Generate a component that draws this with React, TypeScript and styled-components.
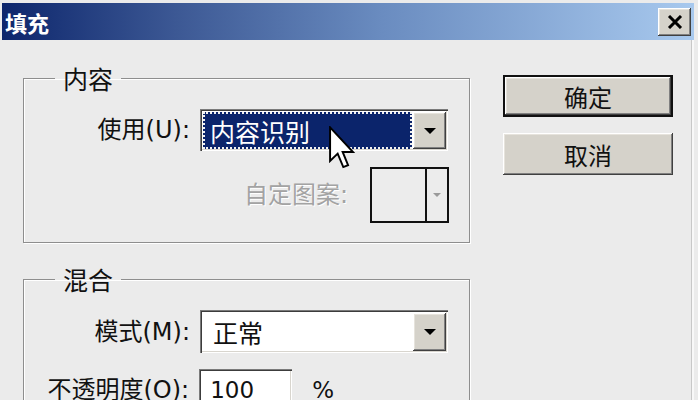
import React from "react";
import styled, { createGlobalStyle } from "styled-components";

const GlobalStyle = createGlobalStyle`
  html, body { margin: 0; padding: 0; background: #ebebeb; }
  body { font-family: "DejaVu Sans", "Noto Sans CJK SC", sans-serif; }
`;

const Window = styled.div`
  width: 698px;
  height: 400px;
  overflow: hidden;
  background: #ebebeb;
  box-sizing: border-box;
  padding: 3px 4px 0 2px;
  display: flex;
  flex-direction: column;
`;

const TitleBar = styled.div`
  height: 37px;
  flex: none;
  display: flex;
  align-items: center;
  justify-content: space-between;
  padding: 0 3px 0 3px;
  background: linear-gradient(90deg, #0d266c 0%, #3c5894 25%, #6a8cc0 55%, #a8c9ee 100%);
`;

const TitleText = styled.span`
  color: #fff;
  font-family: "Noto Sans CJK SC", sans-serif;
  font-size: 22px;
  font-weight: 700;
  line-height: 1;
`;

const raised = `
  background: #d5d2ca;
  box-shadow: inset -1px -1px 0 #404040, inset 1px 1px 0 #ffffff, inset -2px -2px 0 #808080, inset 2px 2px 0 #e6e3dc;
`;

const CloseButton = styled.div`
  width: 33px;
  height: 28px;
  ${raised}
  display: flex;
  align-items: center;
  justify-content: center;
`;

const Body = styled.div`
  flex: 1;
  display: flex;
  align-items: flex-start;
  padding-left: 21px;
  border-right: 2px solid #f8f8f8;
  box-shadow: inset -1px 0 0 #c8c8c8;
`;

const LeftColumn = styled.div`
  width: 447px;
  display: flex;
  flex-direction: column;
`;

const Group = styled.fieldset<{ $top: number }>`
  margin: ${(p) => p.$top}px 0 0 0;
  padding: 16px 0 19px 0;
  border: 1px solid #8e8e8e;
  box-shadow: 1px 1px 0 #ffffff, inset 1px 1px 0 #ffffff;
  display: flex;
  flex-direction: column;
  gap: 16px;
  min-width: 0;
`;

const Legend = styled.legend`
  margin-left: 31px;
  padding: 0 8px;
  font-family: "Noto Sans CJK SC", sans-serif;
  font-size: 25px;
  line-height: 30px;
  color: #111;
`;

const FieldRow = styled.div`
  display: grid;
  grid-template-columns: 1fr 248px;
  column-gap: 10px;
  align-items: center;
  padding-right: 21px;
`;

const Label = styled.span<{ $disabled?: boolean }>`
  text-align: right;
  font-size: 24px;
  line-height: 30px;
  white-space: nowrap;
  color: ${(p) => (p.$disabled ? "#a3a3a3" : "#111")};
  text-shadow: ${(p) => (p.$disabled ? "1px 1px 0 #ffffff" : "none")};
`;

const SelectBox = styled.div<{ $h: number }>`
  position: relative;
  height: ${(p) => p.$h}px;
  box-sizing: border-box;
  background: #fff;
  box-shadow: inset 1px 1px 0 #7a7a7a, inset 2px 2px 0 #3c3c3c, inset -1px -1px 0 #ffffff, inset -2px -2px 0 #d8d5ce;
  display: flex;
  padding: 3px 2px 2px 3px;
`;

const SelectValue = styled.div<{ $selected?: boolean }>`
  flex: 1;
  display: flex;
  align-items: center;
  padding-left: ${(p) => (p.$selected ? "7px" : "10px")};
  font-size: 25px;
  color: ${(p) => (p.$selected ? "#fff" : "#111")};
  background: ${(p) => (p.$selected ? "#0b246b" : "transparent")};
  outline: ${(p) => (p.$selected ? "2px dotted #f0f0f0" : "none")};
  outline-offset: -2px;
  margin-right: 1px;
`;

const DropButton = styled.div`
  width: 33px;
  flex: none;
  ${raised}
  display: flex;
  align-items: center;
  justify-content: center;
`;

const Triangle = styled.div<{ $size: number; $color: string }>`
  width: 0;
  height: 0;
  border-left: ${(p) => p.$size}px solid transparent;
  border-right: ${(p) => p.$size}px solid transparent;
  border-top: ${(p) => p.$size}px solid ${(p) => p.$color};
`;

const PatternRow = styled.div`
  display: flex;
  justify-content: flex-end;
  align-items: center;
  gap: 22px;
  padding-right: 20px;
`;

const PatternPicker = styled.div`
  width: 79px;
  height: 56px;
  box-sizing: border-box;
  border: 2px solid #111;
  display: flex;
  background: #ececec;
`;

const PatternSwatch = styled.div`
  flex: 1;
  border-right: 2px solid #111;
`;

const PatternArrow = styled.div`
  width: 20px;
  display: flex;
  align-items: center;
  justify-content: center;
`;

const OpacityRow = styled.div`
  display: grid;
  grid-template-columns: 1fr auto auto;
  column-gap: 10px;
  align-items: center;
  padding-right: 135px;
`;

const NumberField = styled.div`
  width: 93px;
  height: 42px;
  box-sizing: border-box;
  background: #fff;
  box-shadow: inset 1px 1px 0 #7a7a7a, inset 2px 2px 0 #3c3c3c, inset -1px -1px 0 #ffffff, inset -2px -2px 0 #d8d5ce;
  display: flex;
  align-items: center;
  padding-left: 11px;
  font-size: 23px;
  color: #111;
`;

const Percent = styled.span`
  font-size: 23px;
  margin-left: 10px;
  color: #111;
`;

const ButtonColumn = styled.div`
  margin-left: 33px;
  margin-top: 35px;
  display: flex;
  flex-direction: column;
  gap: 16px;
`;

const Button = styled.div<{ $default?: boolean }>`
  width: 170px;
  height: 42px;
  box-sizing: border-box;
  display: flex;
  align-items: center;
  justify-content: center;
  font-size: 24px;
  color: #111;
  background: #d5d2ca;
  border: ${(p) => (p.$default ? "2px solid #111" : "0")};
  box-shadow: inset -1px -1px 0 #404040, inset 1px 1px 0 #ffffff, inset -2px -2px 0 #808080, inset 2px 2px 0 #e6e3dc;
`;

const Cursor = styled.svg`
  position: absolute;
  left: 129px;
  top: 17px;
  z-index: 2;
`;

export default function App() {
  return (
    <>
      <GlobalStyle />
      <Window>
        <TitleBar>
          <TitleText>填充</TitleText>
          <CloseButton>
            <svg width="16" height="14" viewBox="0 0 16 14">
              <path d="M2 1 L14 13 M14 1 L2 13" stroke="#000" strokeWidth="3" />
            </svg>
          </CloseButton>
        </TitleBar>
        <Body>
          <LeftColumn>
            <Group $top={23}>
              <Legend>内容</Legend>
              <FieldRow>
                <Label>使用(U):</Label>
                <SelectBox $h={42}>
                  <SelectValue $selected>内容识别</SelectValue>
                  <DropButton>
                    <Triangle $size={6} $color="#000" />
                  </DropButton>
                  <Cursor width="26" height="44" viewBox="0 0 12 20">
                    <path
                      d="M0.5 0.5 L0.5 16 L4 12.6 L6.6 18.8 L8.8 17.9 L6.3 11.8 L11 11.8 Z"
                      fill="#fff"
                      stroke="#000"
                      strokeWidth="0.9"
                      strokeLinejoin="miter"
                    />
                  </Cursor>
                </SelectBox>
              </FieldRow>
              <PatternRow>
                <Label $disabled>自定图案:</Label>
                <PatternPicker>
                  <PatternSwatch />
                  <PatternArrow>
                    <Triangle $size={4} $color="#9a9a9a" />
                  </PatternArrow>
                </PatternPicker>
              </PatternRow>
            </Group>
            <Group $top={21}>
              <Legend>混合</Legend>
              <FieldRow>
                <Label>模式(M):</Label>
                <SelectBox $h={43}>
                  <SelectValue>正常</SelectValue>
                  <DropButton>
                    <Triangle $size={6} $color="#000" />
                  </DropButton>
                </SelectBox>
              </FieldRow>
              <OpacityRow>
                <Label>不透明度(O):</Label>
                <NumberField>100</NumberField>
                <Percent>%</Percent>
              </OpacityRow>
            </Group>
          </LeftColumn>
          <ButtonColumn>
            <Button $default>确定</Button>
            <Button>取消</Button>
          </ButtonColumn>
        </Body>
      </Window>
    </>
  );
}
